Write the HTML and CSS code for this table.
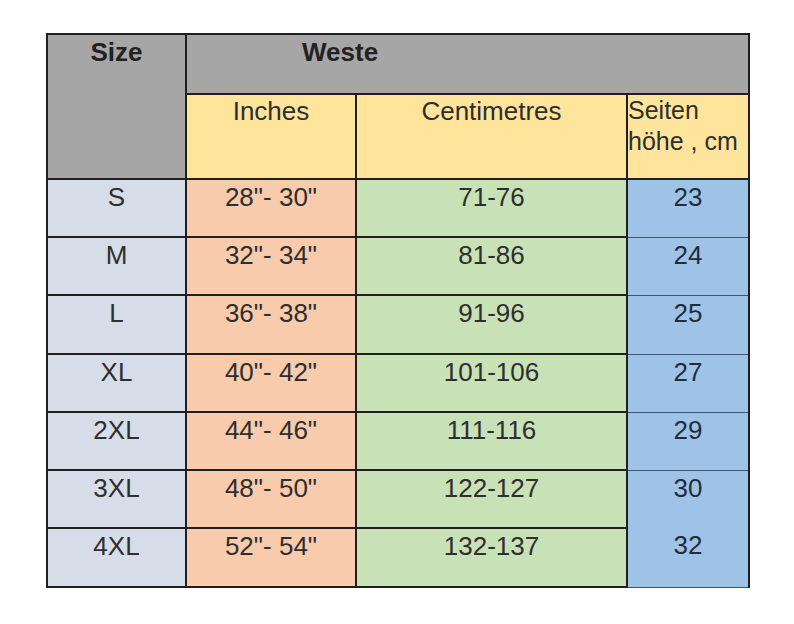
FILE: index.html
```html
<!DOCTYPE html>
<html>
<head>
<meta charset="utf-8">
<link rel="stylesheet" href="styles.css">
</head>
<body>
<div class="page">
<table class="chart">
  <colgroup>
    <col class="c-size">
    <col class="c-in">
    <col class="c-cm">
    <col class="c-side">
  </colgroup>
  <tr class="h1">
    <th class="gray size-h" rowspan="2">Size</th>
    <th class="gray weste" colspan="3">Weste</th>
  </tr>
  <tr class="h2">
    <th class="yellow">Inches</th>
    <th class="yellow">Centimetres</th>
    <th class="yellow side-h">Seiten<br>höhe , cm</th>
  </tr>
  <tr class="row">
    <td class="sz">S</td><td class="in">28"- 30"</td><td class="cm">71-76</td><td class="side">23</td>
  </tr>
  <tr class="row">
    <td class="sz">M</td><td class="in">32"- 34"</td><td class="cm">81-86</td><td class="side">24</td>
  </tr>
  <tr class="row tall">
    <td class="sz">L</td><td class="in">36"- 38"</td><td class="cm">91-96</td><td class="side">25</td>
  </tr>
  <tr class="row">
    <td class="sz">XL</td><td class="in">40"- 42"</td><td class="cm">101-106</td><td class="side">27</td>
  </tr>
  <tr class="row">
    <td class="sz">2XL</td><td class="in">44"- 46"</td><td class="cm">111-116</td><td class="side">29</td>
  </tr>
  <tr class="row">
    <td class="sz">3XL</td><td class="in">48"- 50"</td><td class="cm">122-127</td><td class="side no-bottom">30</td>
  </tr>
  <tr class="row tall">
    <td class="sz">4XL</td><td class="in">52"- 54"</td><td class="cm">132-137</td><td class="side no-top">32</td>
  </tr>
</table>
</div>
</body>
</html>
```
FILE: styles.css
```css
html, body {
  margin: 0;
  padding: 0;
  background: #ffffff;
}
.page {
  width: 794px;
  height: 624px;
  padding: 33px 0 0 46px;
  box-sizing: border-box;
}
.chart {
  border-collapse: collapse;
  table-layout: fixed;
  width: 702px;
  font-family: "Liberation Sans", Arial, sans-serif;
  color: #2e2e2e;
}
.c-size { width: 139px; }
.c-in { width: 170px; }
.c-cm { width: 271px; }
.c-side { width: 122px; }

.chart th, .chart td {
  border: 2px solid #1f1f1f;
  vertical-align: top;
  padding: 0;
  text-align: center;
  font-size: 26px;
  line-height: 28px;
}
.h1 { height: 60px; }
.h2 { height: 85px; }
.row { height: 58px; }
.row.tall { height: 59px; }

.gray {
  background: #a6a6a6;
  font-weight: bold;
  color: #222;
  padding-top: 3px !important;
}
.weste {
  text-align: left !important;
  padding-left: 115px !important;
}
.yellow {
  background: #fee59b;
  font-weight: normal;
  padding-top: 2px !important;
}
.side-h {
  text-align: left !important;
  font-size: 25px !important;
  line-height: 31px !important;
  padding-top: 0 !important;
  padding-left: 0 !important;
}
.chart td { padding-top: 3px; }
.sz { background: #d6dde8; }
.in { background: #f8cbad; }
.cm { background: #c8e1b6; }
.chart td.side {
  background: #9fc3e7;
  color: #1f2d3d;
  border-top: 1px solid #3d5670;
  border-bottom: 1px solid #3d5670;
}
.chart td.side.no-bottom { border-bottom: none; }
.chart td.side.no-top { border-top: none; }
```
